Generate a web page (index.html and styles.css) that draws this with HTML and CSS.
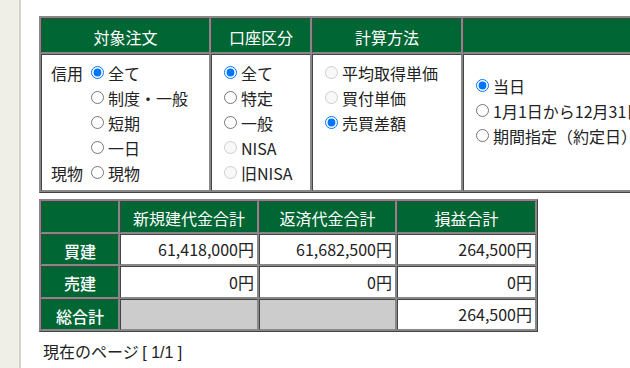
FILE: index.html
```html
<!DOCTYPE html>
<html lang="ja">
<head>
    <meta charset="UTF-8">
    <title>損益計算</title>
    <link rel="stylesheet" href="styles.css">
</head>
<body>

<div class="page">
    <div class="side"></div>

    <div class="main">
        <!-- 検索条件 -->
        <table class="grid cond">
            <tr>
                <th class="c1">対象注文</th>
                <th class="c2">口座区分</th>
                <th class="c3">計算方法</th>
                <th class="c4">集計期間</th>
            </tr>
            <tr>
                <td class="c1">
                    <div class="opt"><span class="kind">信用</span><label><input type="radio" name="order" checked>全て</label></div>
                    <div class="opt"><span class="kind"></span><label><input type="radio" name="order">制度・一般</label></div>
                    <div class="opt"><span class="kind"></span><label><input type="radio" name="order">短期</label></div>
                    <div class="opt"><span class="kind"></span><label><input type="radio" name="order">一日</label></div>
                    <div class="opt"><span class="kind">現物</span><label><input type="radio" name="order">現物</label></div>
                </td>
                <td class="c2">
                    <div class="opt"><label><input type="radio" name="account" checked>全て</label></div>
                    <div class="opt"><label><input type="radio" name="account">特定</label></div>
                    <div class="opt"><label><input type="radio" name="account">一般</label></div>
                    <div class="opt"><label><input type="radio" name="account" disabled>NISA</label></div>
                    <div class="opt"><label><input type="radio" name="account" disabled>旧NISA</label></div>
                </td>
                <td class="c3">
                    <div class="opt"><label><input type="radio" name="calc" disabled>平均取得単価</label></div>
                    <div class="opt"><label><input type="radio" name="calc" disabled>買付単価</label></div>
                    <div class="opt"><label><input type="radio" name="calc" checked>売買差額</label></div>
                </td>
                <td class="c4">
                    <div class="opt"><label><input type="radio" name="term" checked>当日</label></div>
                    <div class="opt"><label><input type="radio" name="term">1月1日から12月31日まで</label></div>
                    <div class="opt"><label><input type="radio" name="term">期間指定（約定日）</label></div>
                </td>
            </tr>
        </table>

        <!-- 集計結果 -->
        <table class="grid result">
            <tr>
                <th class="r1"></th>
                <th class="r2">新規建代金合計</th>
                <th class="r3">返済代金合計</th>
                <th class="r4">損益合計</th>
            </tr>
            <tr>
                <th class="row">買建</th>
                <td class="num">61,418,000円</td>
                <td class="num">61,682,500円</td>
                <td class="num">264,500円</td>
            </tr>
            <tr>
                <th class="row">売建</th>
                <td class="num">0円</td>
                <td class="num">0円</td>
                <td class="num">0円</td>
            </tr>
            <tr>
                <th class="row">総合計</th>
                <td class="blank"></td>
                <td class="blank"></td>
                <td class="num">264,500円</td>
            </tr>
        </table>

        <div class="current">現在のページ <span class="pg">[ 1/1 ]</span></div>
        <div class="pager"><span class="arrow"></span><span class="arrow next"></span></div>
    </div>
</div>

</body>
</html>
```

FILE: styles.css
```css
html, body {
    margin: 0;
    padding: 0;
    height: 100%;
    overflow: hidden;
    background: #fff;
}

body {
    font-family: "Noto Sans CJK JP", "Noto Sans", sans-serif;
    font-size: 16px;
    color: #222;
}

.page {
    display: flex;
    height: 100%;
}

.side {
    flex: none;
    width: 19px;
    background: #efefe7;
    border-right: 2px solid #d3d3cb;
}

.main {
    flex: 1;
    min-width: 0;
    padding: 16px 0 0 18px;
}

/* tables with the old outset/inset look */
.grid {
    border-collapse: separate;
    border-spacing: 1px;
    background: #888;
    border: 1px solid;
    border-color: #888 #444 #444 #888;
    table-layout: fixed;
}

.grid th,
.grid td {
    box-sizing: border-box;
    border: 1px solid;
    border-color: #444 #888 #888 #444;
    padding: 0;
}

.grid th {
    background: #006633;
    color: #fff;
    font-weight: normal;
}

.grid td {
    background: #fff;
}

/* condition table */
.cond {
    width: 886px;
}

.cond th {
    height: 35px;
    padding-top: 2px;
    line-height: 30px;
}

.cond td {
    vertical-align: top;
    padding: 5px 0 5px 11px;
}

.cond .c1 { width: 169px; }
.cond .c2 { width: 100px; }
.cond .c3 { width: 150px; }
.cond .c4 { width: 460px; }

.cond td.c1 { padding-left: 9px; }
.cond td.c4 { padding-top: 18px; }

.opt {
    display: flex;
    align-items: center;
    height: 25px;
    white-space: nowrap;
}

.opt label {
    display: flex;
    align-items: center;
}

.opt input {
    width: 13px;
    height: 13px;
    margin: 0 4px 0 1px;
}

.kind {
    width: 32px;
    margin-right: 7px;
}

/* result table */
.result {
    width: 499px;
    margin-top: 6px;
}

.result th,
.result td {
    height: 31.5px;
    line-height: 22px;
}

.result th {
    padding-top: 3px;
}

.result .r1 { width: 78px; }
.result .r2 { width: 138px; }
.result .r3 { width: 137px; }
.result .r4 { width: 139px; }

.result th.row {
    font-weight: 500;
}

.result td.num {
    text-align: right;
    padding-right: 3px;
}

.result td.blank {
    background: #ccc;
}

.current {
    margin-top: 7px;
    padding-left: 4px;
    line-height: 24px;
}

.pg {
    font-family: "Liberation Sans", sans-serif;
}

/* prev / next markers, only their tips show */
.pager {
    display: flex;
    padding: 3px 0 0 12px;
}

.arrow {
    width: 0;
    height: 0;
    border-top: 5px solid transparent;
    border-bottom: 5px solid transparent;
    border-right: 6px solid #5a9a2a;
}

.arrow.next {
    margin-left: 82px;
    border-right: 0;
    border-left: 6px solid #c8a020;
}
```
